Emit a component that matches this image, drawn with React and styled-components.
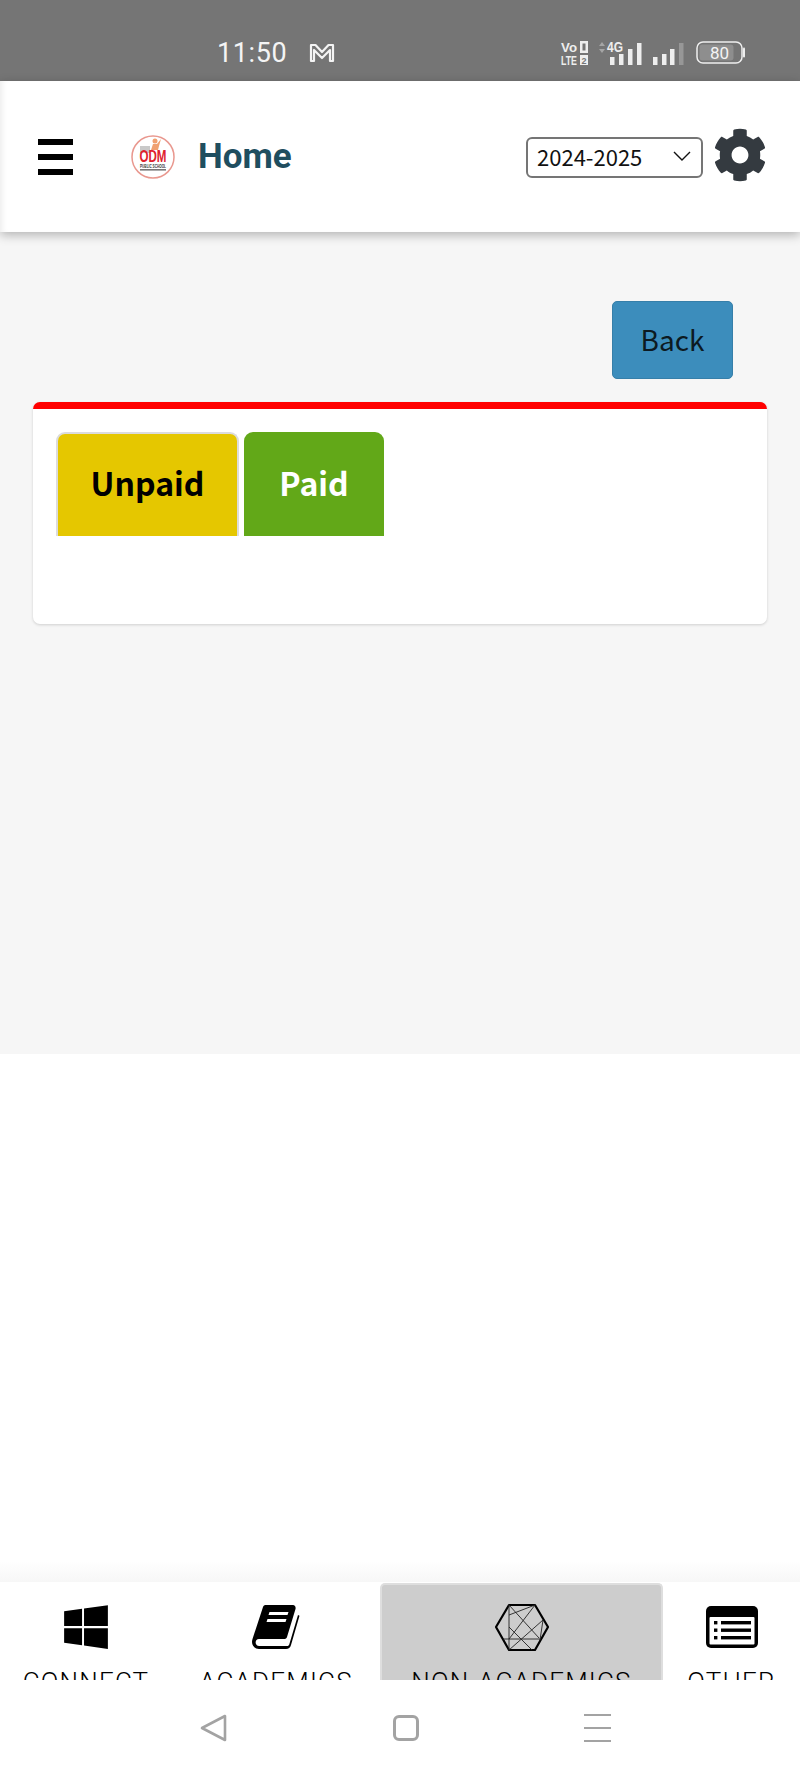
import React from 'react';
import styled, { createGlobalStyle } from 'styled-components';
import { FaWindows, FaCog } from 'react-icons/fa';

const GlobalStyle = createGlobalStyle`
  html, body {
    margin: 0;
    padding: 0;
    background: #fff;
  }

  svg {
    overflow: visible;
  }
`;

const Page = styled.div`
  width: 800px;
  height: 1778px;
  display: flex;
  flex-direction: column;
  overflow: hidden;
  font-family: 'Noto Sans CJK SC', 'Noto Sans', sans-serif;
`;

const StatusBar = styled.div`
  height: 81px;
  flex: none;
  background: #757575;
  color: #f4f4f4;
  display: flex;
  align-items: center;
  padding: 24px 0 0 217px;
  box-sizing: border-box;
`;

const Clock = styled.span`
  font-family: Roboto, sans-serif;
  font-size: 27px;
  font-weight: 400;
  letter-spacing: 0.6px;
  width: 92px;
`;

const StatusIcons = styled.div`
  margin-left: 226px;
  display: flex;
  align-items: center;
  gap: 10px;
`;

const Header = styled.header`
  height: 151px;
  flex: none;
  background: #fff;
  display: flex;
  align-items: center;
  padding: 0 33px 0 38px;
  box-sizing: border-box;
  box-shadow: 0 3px 10px rgba(0, 0, 0, 0.28), inset 6px 0 6px -4px rgba(0, 0, 0, 0.08);
  position: relative;
`;

const Burger = styled.div`
  width: 35px;
  height: 36px;
  display: flex;
  flex-direction: column;
  justify-content: space-between;

  span {
    display: block;
    height: 6px;
    background: #000;
  }
`;

const Logo = styled.svg`
  margin-left: 58px;
  flex: none;
`;

const Title = styled.h1`
  margin: 0 0 0 23px;
  font-family: Roboto, sans-serif;
  font-size: 35px;
  font-weight: 700;
  color: #1f4e5f;
  flex: 1;
`;

const YearSelect = styled.div`
  width: 177px;
  height: 41px;
  box-sizing: border-box;
  border: 2px solid #757575;
  border-radius: 6px;
  display: flex;
  align-items: center;
  justify-content: space-between;
  padding: 0 9px 2px 9px;
  font-size: 22px;
  font-weight: 400;
  color: #111;
  margin-top: 1px;
`;

const Gear = styled(FaCog)`
  margin-left: 10px;
  color: #343a40;
  font-size: 54px;
  margin-top: -3px;
`;

const Content = styled.main`
  height: 822px;
  flex: none;
  background: #f6f6f6;
  padding: 69px 33px 0;
  box-sizing: border-box;
`;

const BackRow = styled.div`
  display: flex;
  justify-content: flex-end;
  padding-right: 34px;
`;

const BackButton = styled.button`
  width: 121px;
  height: 78px;
  background: #3c8dbc;
  border: 1px solid #367fa9;
  border-radius: 5px;
  color: #0c1a22;
  font-family: inherit;
  font-size: 28px;
  padding: 0 0 2px;
`;

const Card = styled.section`
  margin-top: 23px;
  height: 222px;
  box-sizing: border-box;
  background: #fff;
  border-top: 7px solid #f00;
  border-radius: 7px;
  box-shadow: 0 1px 3px rgba(0, 0, 0, 0.16);
  padding: 23px 23px 0;
`;

const Tabs = styled.div`
  display: flex;
  align-items: flex-end;
  gap: 5px;
`;

const Tab = styled.div`
  width: ${p => p.$width}px;
  height: 104px;
  box-sizing: border-box;
  background: ${p => p.$bg};
  color: ${p => p.$fg};
  border: ${p => (p.$outlined ? '2px solid #dcdcdc' : 'none')};
  border-bottom: none;
  border-radius: 9px 9px 0 0;
  display: flex;
  justify-content: center;
  padding-top: ${p => (p.$outlined ? '25px' : '27px')};
  font-size: 32px;
  font-weight: 700;
  line-height: 46px;
`;

const Filler = styled.div`
  flex: 1;
  background: linear-gradient(to bottom, #fff 96%, #f7f7f7 100%);
`;

const TabBar = styled.nav`
  height: 98px;
  flex: none;
  background: #fff;
  display: flex;
  overflow: hidden;
`;

const BarItem = styled.div`
  width: ${p => p.$width}px;
  flex: none;
  box-sizing: border-box;
  background: ${p => (p.$active ? '#cdcdcd' : 'transparent')};
  border: ${p => (p.$active ? '2px solid #dedede' : 'none')};
  border-bottom: none;
  border-radius: ${p => (p.$active ? '5px 5px 0 0' : '0')};
  margin-top: ${p => (p.$active ? '1px' : '0')};
  display: flex;
  flex-direction: column;
  align-items: center;
`;

const BarIcon = styled.div`
  flex: none;
  height: 46px;
  margin-top: ${p => (p.$active ? '19px' : '22px')};
  display: flex;
  align-items: center;
  justify-content: center;
  color: #000;
`;

const BarLabel = styled.span`
  flex: none;
  margin-top: 14px;
  font-family: Roboto, sans-serif;
  font-size: 26px;
  font-weight: 300;
  line-height: 36px;
  color: #000;
  white-space: nowrap;
  letter-spacing: 1.2px;
`;

const SystemNav = styled.div`
  height: 98px;
  flex: none;
  background: #fff;
  display: flex;
  justify-content: center;
  align-items: center;
  gap: 165px;
  padding: 0 0 2px 10px;
  box-sizing: border-box;
`;

const HomeSquare = styled.div`
  width: 26px;
  height: 26px;
  box-sizing: border-box;
  border: 3px solid #a3a3a3;
  border-radius: 6px;
`;

const MenuLines = styled.div`
  width: 27px;
  height: 28px;
  display: flex;
  flex-direction: column;
  justify-content: space-between;

  span {
    display: block;
    height: 2px;
    background: #a3a3a3;
  }
`;

const MailGlyph = () => (
  <svg width="26" height="20" viewBox="0 0 26 20" fill="none" stroke="#f4f4f4" strokeWidth="2.2" strokeLinejoin="round">
    <path d="M2 2h4.5L13 9l6.5-7H24v16h-3V7l-8 8-8-8v11H2z" />
  </svg>
);

const NetworkGlyph = () => (
  <svg width="125" height="26" viewBox="0 0 125 26" fill="#eee">
    <g fontFamily="Liberation Sans, sans-serif" fontWeight="700">
      <text x="0" y="12" fontSize="13" textLength="16" lengthAdjust="spacingAndGlyphs">Vo</text>
      <text x="0" y="25" fontSize="13" textLength="16" lengthAdjust="spacingAndGlyphs">LTE</text>
      <text x="46" y="12" fontSize="14" textLength="16" lengthAdjust="spacingAndGlyphs">4G</text>
    </g>
    <path fillRule="evenodd" d="M19 1h8v12h-8zM21.5 3.5v7h3v-7z" />
    <rect x="19" y="15" width="8" height="10" />
    <text x="20.5" y="24" fontFamily="Liberation Sans, sans-serif" fontWeight="700" fontSize="9" fill="#757575">2</text>
    <path d="M38 6l3-4 3 4zM38 9l3 4 3-4z" fill="#a5a5a5" />
    <rect x="49" y="17" width="4.5" height="8" />
    <rect x="58" y="14" width="4.5" height="11" />
    <rect x="67" y="9" width="4.5" height="16" />
    <rect x="76" y="3" width="4.5" height="22" />
    <rect x="92" y="17" width="4.5" height="8" />
    <rect x="101" y="14" width="4.5" height="11" />
    <rect x="109" y="9" width="4.5" height="16" />
    <rect x="118" y="3" width="4.5" height="22" fill="#979797" />
  </svg>
);

const Battery = () => (
  <svg width="50" height="23" viewBox="0 0 50 23" fill="none">
    <rect x="1" y="1" width="45" height="21" rx="6" stroke="#eee" strokeWidth="1.5" />
    <rect x="3.5" y="3.5" width="34" height="16" rx="3" fill="#8e8e8e" />
    <path d="M48 7.5v8" stroke="#eee" strokeWidth="2" strokeLinecap="round" />
    <text x="23.5" y="18" textAnchor="middle" fontFamily="Roboto, sans-serif" fontSize="17" fill="#f4f4f4">80</text>
  </svg>
);

const SchoolLogo = () => (
  <Logo width="44" height="46" viewBox="0 0 44 46">
    <circle cx="22" cy="23" r="21" fill="#fff" stroke="#e9988f" strokeWidth="1.5" />
    <rect x="9" y="12" width="10" height="7" fill="#c9c9c9" />
    <path d="M20 16l2-6 4 0 4-5-2 7-1 4z" fill="#f0a070" />
    <circle cx="24" cy="7" r="2.5" fill="#f0a070" />
    <text x="22" y="28" textAnchor="middle" fontFamily="Liberation Sans, sans-serif" fontWeight="700" fontSize="16" fill="#e0202c" textLength="27" lengthAdjust="spacingAndGlyphs">ODM</text>
    <text x="22" y="33.5" textAnchor="middle" fontFamily="Liberation Sans, sans-serif" fontWeight="700" fontSize="6" fill="#333" textLength="26" lengthAdjust="spacingAndGlyphs">PUBLIC SCHOOL</text>
    <rect x="9" y="35" width="26" height="1.6" fill="#777" />
  </Logo>
);

const Chevron = () => (
  <svg width="20" height="12" viewBox="0 0 20 12" fill="none" stroke="#111" strokeWidth="1.4">
    <path d="M2 2l8 8 8-8" />
  </svg>
);

const BookIcon = () => (
  <svg width="48" height="46" viewBox="0 0 48 46">
    <path
      fillRule="evenodd"
      d="M14 1h27c2 0 3 2 2.5 4L35 33c-.5 1.5-1.5 2-3 2H7c-3 0-4 3-3 5 .5 1 1.5 2 3 2h28c1.2 0 2-.5 2.4-2L46 11l1.5.8L39 41c-.6 2.5-2.5 4-5 4H7c-4 0-7-3-7-7 0-1 .2-2 .5-3L11 3c.5-1.5 1.5-2 3-2zM17.5 8l-1 3h19l1-3zM15.5 15l-1 3h19l1-3z"
      fill="#000"
    />
  </svg>
);

const HexIcon = () => (
  <svg width="54" height="48" viewBox="0 0 54 48" fill="none" stroke="#000">
    <path d="M14 2h26l13 22-13 23H14L1 24z" strokeWidth="2.2" strokeLinejoin="round" />
    <g strokeWidth="0.9" stroke="#222">
      <path d="M14 2v45M14 2l30 33M40 2L14 36M14 12L40 2M8 36h38M14 47l34-30M48 17l-3 20M14 24l23 23" />
    </g>
  </svg>
);

const ListIcon = () => (
  <svg width="52" height="42" viewBox="0 0 52 42">
    <rect width="52" height="42" rx="5" fill="#000" />
    <rect x="3.5" y="11" width="45" height="27.5" rx="1" fill="#fff" />
    <rect x="8" y="15" width="3.4" height="3.4" fill="#000" />
    <rect x="8" y="22.5" width="3.4" height="3.4" fill="#000" />
    <rect x="8" y="30" width="3.4" height="3.4" fill="#000" />
    <rect x="15" y="15" width="30" height="3.4" fill="#000" />
    <rect x="15" y="22.5" width="30" height="3.4" fill="#000" />
    <rect x="15" y="30" width="30" height="3.4" fill="#000" />
  </svg>
);

const barItems = [
  { label: 'CONNECT', width: 172, icon: <FaWindows size={50} /> },
  { label: 'ACADEMICS', width: 208, icon: <BookIcon /> },
  { label: 'NON-ACADEMICS', width: 283, icon: <HexIcon />, active: true },
  { label: 'OTHER', width: 137, icon: <ListIcon /> },
];

const App = () => (
  <Page>
    <GlobalStyle />
    <StatusBar>
      <Clock>11:50</Clock>
      <MailGlyph />
      <StatusIcons>
        <NetworkGlyph />
        <Battery />
      </StatusIcons>
    </StatusBar>

    <Header>
      <Burger>
        <span />
        <span />
        <span />
      </Burger>
      <SchoolLogo />
      <Title>Home</Title>
      <YearSelect>
        2024-2025
        <Chevron />
      </YearSelect>
      <Gear />
    </Header>

    <Content>
      <BackRow>
        <BackButton>Back</BackButton>
      </BackRow>
      <Card>
        <Tabs>
          <Tab $width={183} $bg="#e5c700" $fg="#000" $outlined>Unpaid</Tab>
          <Tab $width={140} $bg="#62a818" $fg="#fff">Paid</Tab>
        </Tabs>
      </Card>
    </Content>

    <Filler />

    <TabBar>
      {barItems.map(item => (
        <BarItem key={item.label} $width={item.width} $active={item.active}>
          <BarIcon $active={item.active}>{item.icon}</BarIcon>
          <BarLabel>{item.label}</BarLabel>
        </BarItem>
      ))}
    </TabBar>

    <SystemNav>
      <svg width="28" height="28" viewBox="0 0 28 28" fill="none" stroke="#a3a3a3" strokeWidth="2.6" strokeLinejoin="round">
        <path d="M2 14L25 2v24z" />
      </svg>
      <HomeSquare />
      <MenuLines>
        <span />
        <span />
        <span />
      </MenuLines>
    </SystemNav>
  </Page>
);

export default App;
